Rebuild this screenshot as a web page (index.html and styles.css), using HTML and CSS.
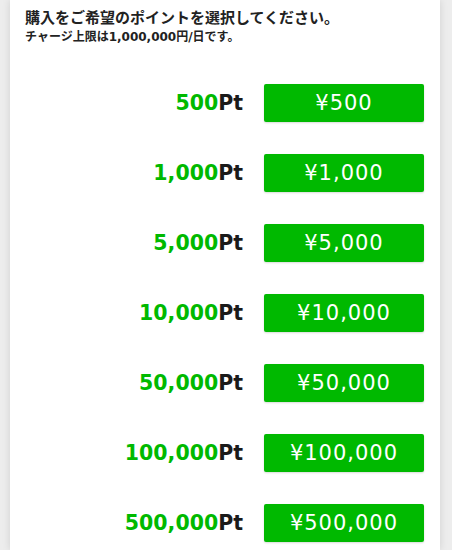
FILE: index.html
```html
<!DOCTYPE html>
<html lang="ja">
<head>
    <meta charset="utf-8">
    <title>ポイント購入</title>
    <meta name="viewport" content="width=device-width,initial-scale=1.0">
    <link rel="stylesheet" href="styles.css">
</head>
<body>
    <main class="card">
        <header class="intro">
            <h1>購入をご希望のポイントを選択してください。</h1>
            <p>チャージ上限は1,000,000円/日です。</p>
        </header>
        <ul class="plans">
            <li><span class="pt"><em>500</em>Pt</span><button>¥500</button></li>
            <li><span class="pt"><em>1,000</em>Pt</span><button>¥1,000</button></li>
            <li><span class="pt"><em>5,000</em>Pt</span><button>¥5,000</button></li>
            <li><span class="pt"><em>10,000</em>Pt</span><button>¥10,000</button></li>
            <li><span class="pt"><em>50,000</em>Pt</span><button>¥50,000</button></li>
            <li><span class="pt"><em>100,000</em>Pt</span><button>¥100,000</button></li>
            <li><span class="pt"><em>500,000</em>Pt</span><button>¥500,000</button></li>
        </ul>
    </main>
</body>
</html>
```

FILE: styles.css
```css
html {
    background: #ededed;
}

body {
    margin: 0;
    font-family: "DejaVu Sans", "Noto Sans CJK JP", sans-serif;
    color: #222;
}

.card {
    margin: 0 12px 0 10px;
    min-height: 550px;
    background: #fff;
    box-shadow: 0 0 8px rgba(0, 0, 0, 0.12);
    padding: 6px 16px 0 15px;
    box-sizing: border-box;
}

.intro h1 {
    margin: 0;
    font-family: "Noto Sans CJK JP", sans-serif;
    font-size: 15px;
    line-height: 22px;
    font-weight: bold;
}

.intro p {
    margin: 1px 0 0;
    font-size: 12px;
    line-height: 16px;
    font-weight: bold;
}

.plans {
    list-style-type: none;
    margin: 39px 0 0;
    padding: 0;
    display: flex;
    flex-direction: column;
    gap: 32px;
}

.plans li {
    display: flex;
    justify-content: flex-end;
    align-items: center;
    gap: 21px;
}

.pt {
    font-size: 20.5px;
    font-weight: bold;
    color: #1a1a1a;
}

.pt em {
    font-style: normal;
    color: #00b900;
}

.plans button {
    width: 160px;
    height: 38px;
    border: none;
    border-radius: 2px;
    background: #00b900;
    color: #fff;
    font-family: inherit;
    font-size: 21px;
    letter-spacing: 1px;
    padding: 0;
    box-shadow: 0 1px 2px rgba(0, 0, 0, 0.15);
}
```
